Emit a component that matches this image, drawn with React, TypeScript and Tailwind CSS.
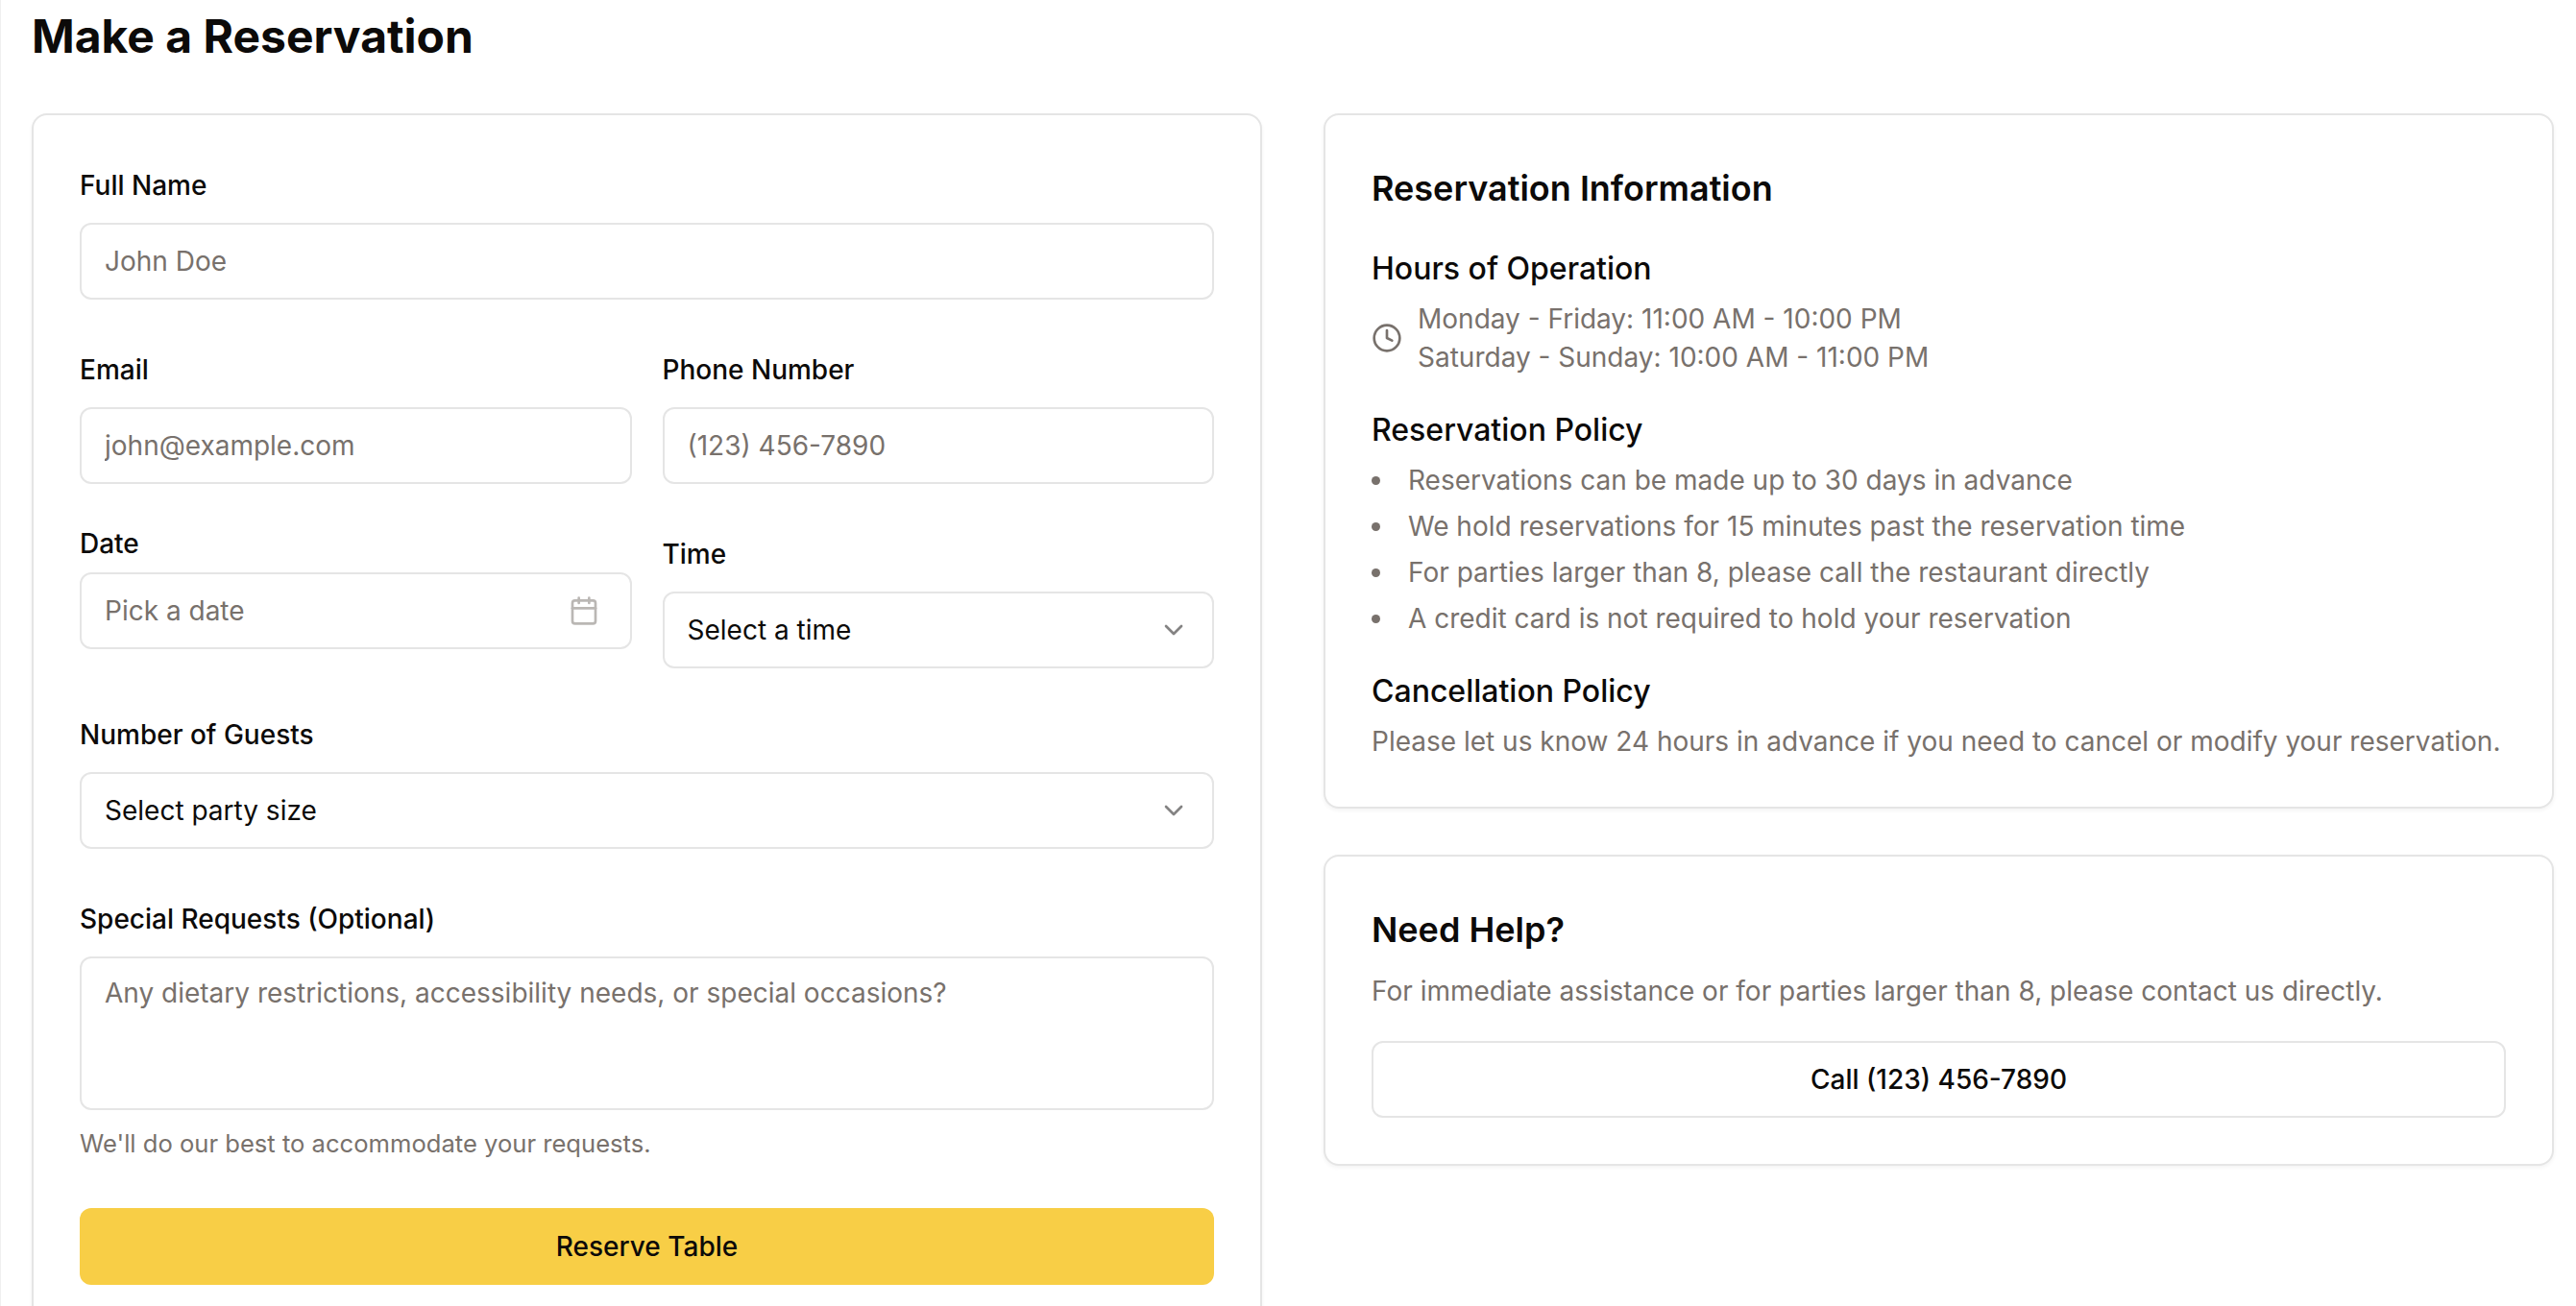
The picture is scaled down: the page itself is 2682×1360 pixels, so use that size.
import type { ReactNode } from 'react';
import { Calendar, ChevronDown, Clock } from 'lucide-react';

const policies = [
  'Reservations can be made up to 30 days in advance',
  'We hold reservations for 15 minutes past the reservation time',
  'For parties larger than 8, please call the restaurant directly',
  'A credit card is not required to hold your reservation',
];

const control =
  'h-20 w-full rounded-[12px] border-2 border-[#e5e5e5] bg-white px-6 text-[28px] leading-10';

interface FieldProps {
  label: string;
  htmlFor: string;
  children: ReactNode;
}

function Field({ label, htmlFor, children }: FieldProps) {
  return (
    <div className="flex flex-col gap-4">
      {/* Inline label on a body-size line, so it keeps the body text's baseline */}
      <div className="text-[32px] leading-[48px]">
        <label htmlFor={htmlFor} className="text-[28px] leading-none font-medium">
          {label}
        </label>
      </div>
      {children}
    </div>
  );
}

function SelectButton({ id, children }: { id: string; children: ReactNode }) {
  return (
    <button
      id={id}
      type="button"
      className={`${control} flex items-center justify-between`}
    >
      <span>{children}</span>
      <ChevronDown className="size-8 opacity-50" />
    </button>
  );
}

function Card({ children }: { children: ReactNode }) {
  return (
    <section className="rounded-[16px] border-2 border-[#e5e5e5] bg-white p-12 shadow-[0_2px_4px_rgba(0,0,0,0.05)]">
      {children}
    </section>
  );
}

function ReservationForm() {
  return (
    <form className="flex flex-col gap-12">
      <Field label="Full Name" htmlFor="name">
        <input id="name" placeholder="John Doe" className={`${control} placeholder:text-[#78716c]`} />
      </Field>

      <div className="grid grid-cols-2 gap-8">
        <Field label="Email" htmlFor="email">
          <input
            id="email"
            type="email"
            placeholder="john@example.com"
            className={`${control} placeholder:text-[#78716c]`}
          />
        </Field>
        <Field label="Phone Number" htmlFor="phone">
          <input
            id="phone"
            type="tel"
            placeholder="(123) 456-7890"
            className={`${control} placeholder:text-[#78716c]`}
          />
        </Field>
      </div>

      <div className="grid h-[140px] grid-cols-2 gap-8">
        {/* The date label has no extra leading, so this field sits higher than Time */}
        <div className="flex flex-col gap-4">
          <label htmlFor="date" className="text-[28px] leading-none font-medium">
            Date
          </label>
          <button
            id="date"
            type="button"
            className="flex h-20 w-full items-center justify-between rounded-[12px] border-2 border-[#e5e5e5] bg-white pr-8 pl-6 text-[28px] leading-10 text-[#78716c]"
          >
            <span>Pick a date</span>
            <Calendar className="size-8 opacity-50" />
          </button>
        </div>
        <Field label="Time" htmlFor="time">
          <SelectButton id="time">Select a time</SelectButton>
        </Field>
      </div>

      <Field label="Number of Guests" htmlFor="guests">
        <SelectButton id="guests">Select party size</SelectButton>
      </Field>

      <Field label="Special Requests (Optional)" htmlFor="requests">
        <textarea
          id="requests"
          placeholder="Any dietary restrictions, accessibility needs, or special occasions?"
          className="h-40 w-full resize-none rounded-[12px] border-2 border-[#e5e5e5] bg-white px-6 py-4 text-[28px] leading-10 placeholder:text-[#78716c]"
        />
        <p className="text-[25.6px] leading-[38px] text-[#78716c]">
          We'll do our best to accommodate your requests.
        </p>
      </Field>

      <button
        type="submit"
        className="h-20 w-full rounded-[12px] bg-[#f8ce46] text-[28px] leading-10 font-medium"
      >
        Reserve Table
      </button>
    </form>
  );
}

function InfoSection({ title, children }: { title: string; children: ReactNode }) {
  return (
    <div>
      <h3 className="mb-2 text-[32px] leading-[48px] font-medium">{title}</h3>
      <div className="text-[28px] leading-10 text-[#78716c]">{children}</div>
    </div>
  );
}

export default function App() {
  return (
    <main className="h-screen overflow-hidden border-l border-[#f0f0f0] bg-white pt-1.5 pr-[23px] pl-8 font-['Inter',sans-serif] text-[#0c0a09]">
      <h1 className="mb-12 text-[48px] leading-[64px] font-bold">Make a Reservation</h1>

      <div className="grid grid-cols-2 items-start gap-16">
        <Card>
          <ReservationForm />
        </Card>

        <div className="flex flex-col gap-12">
          <Card>
            <h2 className="mb-8 text-[36px] leading-[56px] font-semibold">Reservation Information</h2>
            <div className="flex flex-col gap-8">
              <InfoSection title="Hours of Operation">
                <div className="flex items-center gap-4">
                  <Clock className="size-8" />
                  <div>
                    <p>Monday - Friday: 11:00 AM - 10:00 PM</p>
                    <p>Saturday - Sunday: 10:00 AM - 11:00 PM</p>
                  </div>
                </div>
              </InfoSection>
              <InfoSection title="Reservation Policy">
                <ul className="list-inside list-disc space-y-2">
                  {policies.map((policy) => (
                    <li key={policy}>{policy}</li>
                  ))}
                </ul>
              </InfoSection>
              <InfoSection title="Cancellation Policy">
                <p>Please let us know 24 hours in advance if you need to cancel or modify your reservation.</p>
              </InfoSection>
            </div>
          </Card>

          <Card>
            <h2 className="mb-4 text-[36px] leading-[56px] font-semibold">Need Help?</h2>
            <p className="mb-8 text-[28px] leading-10 text-[#78716c]">
              For immediate assistance or for parties larger than 8, please contact us directly.
            </p>
            <button type="button" className={`${control} font-medium`}>
              Call (123) 456-7890
            </button>
          </Card>
        </div>
      </div>
    </main>
  );
}
